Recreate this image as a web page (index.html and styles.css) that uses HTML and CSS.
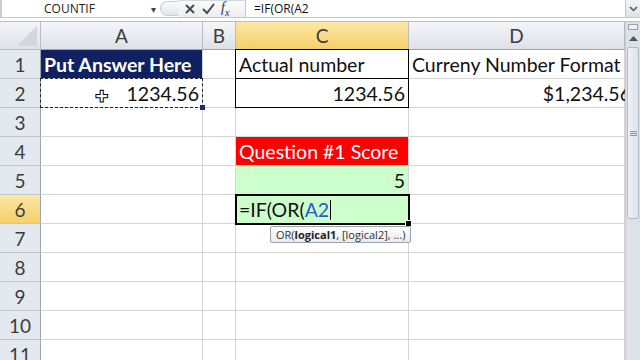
FILE: index.html
```html
<!DOCTYPE html>
<html>
<head>
<meta charset="utf-8">
<link rel="stylesheet" href="styles.css">
</head>
<body>
<div class="app">
  <div class="fbar">
    <div class="namebox"><span class="name">COUNTIF</span><span class="dd">&#9662;</span></div>
    <div class="grip"></div>
    <div class="btns">
      <svg class="ico" width="12" height="12" viewBox="0 0 12 12"><path d="M2 2 L10 10 M10 2 L2 10" stroke="#4a4a4a" stroke-width="2"/></svg>
      <svg class="ico" width="13" height="12" viewBox="0 0 13 12"><path d="M1 6 L5 10 L12 1" stroke="#4a4a4a" stroke-width="2" fill="none"/></svg>
      <span class="fx">f<sub>x</sub></span>
    </div>
    <div class="formula">=IF(OR(A2</div>
    <div class="expand"><svg width="9" height="6" viewBox="0 0 9 6"><path d="M1 1 L4.5 4.5 L8 1" stroke="#555" stroke-width="1.5" fill="none"/></svg></div>
  </div>
  <div class="gap"></div>
  <div class="sheet">
    <div class="grid">
      <div class="corner"><svg width="24" height="20" viewBox="0 0 24 20"><path d="M24 0 L24 20 L4 20 Z" fill="#d3d7dd"/></svg></div>
      <div class="ch">A</div>
      <div class="ch">B</div>
      <div class="ch sel">C</div>
      <div class="ch">D</div>

      <div class="rh">1</div>
      <div class="c navy">Put Answer Here</div>
      <div class="c"></div>
      <div class="c bx">Actual number</div>
      <div class="c">Curreny Number Format</div>

      <div class="rh">2</div>
      <div class="c r ants">1234.56<span class="cross">&#10010;</span></div>
      <div class="c"></div>
      <div class="c r bx">1234.56</div>
      <div class="c r clip"><span class="over">$1,234.56</span></div>

      <div class="rh">3</div>
      <div class="c"></div><div class="c"></div><div class="c"></div><div class="c"></div>

      <div class="rh">4</div>
      <div class="c"></div><div class="c"></div>
      <div class="c red">Question #1 Score</div>
      <div class="c"></div>

      <div class="rh">5</div>
      <div class="c"></div><div class="c"></div>
      <div class="c r green">5</div>
      <div class="c"></div>

      <div class="rh hl">6</div>
      <div class="c"></div><div class="c"></div>
      <div class="c green active">=IF(OR(<span class="ref">A2</span><span class="caret"></span>
        <div class="tip">OR(<b>logical1</b>, [logical2], ...)</div>
      </div>
      <div class="c"></div>

      <div class="rh">7</div>
      <div class="c"></div><div class="c"></div><div class="c"></div><div class="c"></div>
      <div class="rh">8</div>
      <div class="c"></div><div class="c"></div><div class="c"></div><div class="c"></div>
      <div class="rh">9</div>
      <div class="c"></div><div class="c"></div><div class="c"></div><div class="c"></div>
      <div class="rh">10</div>
      <div class="c"></div><div class="c"></div><div class="c"></div><div class="c"></div>
      <div class="rh">11</div>
      <div class="c"></div><div class="c"></div><div class="c"></div><div class="c"></div>
    </div>
    <div class="vscroll">
      <div class="split"></div>
      <div class="up"><svg width="9" height="5" viewBox="0 0 9 5"><path d="M0 5 L4.5 0 L9 5 Z" fill="#555"/></svg></div>
      <div class="thumb"><span class="grips"></span></div>
    </div>
  </div>
</div>
</body>
</html>
```
FILE: styles.css
```css
* { box-sizing: border-box; }
html, body { margin: 0; padding: 0; }
body { width: 640px; height: 360px; overflow: hidden; background: #fff; font-family: Lato, "Open Sans", sans-serif; }
.app { width: 640px; height: 360px; overflow: hidden; display: flex; flex-direction: column; }
.app > * { flex-shrink: 0; }

.fbar { height: 18px; display: flex; align-items: stretch; border-bottom: 1px solid #c5c9cf; border-left: 2px solid #c9ccd1; background: #fff; }
.namebox { width: 158px; display: flex; align-items: center; justify-content: space-between; padding-left: 42px; padding-right: 4px; font-family: "Open Sans", sans-serif; font-size: 12px; color: #222; }
.dd { font-size: 10px; color: #444; }
.grip { width: 18px; margin: 1px 0; border: 1px solid #c9cdd3; border-right: none; border-radius: 9px 0 0 9px; background: linear-gradient(#fafafa, #e2e5ea); }
.btns { width: 67px; display: flex; align-items: center; gap: 6px; padding-left: 6px; background: linear-gradient(#fafafa, #eceef1); border-top: 1px solid #d5d8dc; }
.fx { font-family: "Liberation Serif", serif; font-style: italic; font-size: 14px; color: #333; line-height: 1; }
.fx sub { font-size: 10px; }
.formula { flex: 1; border-left: 1px solid #c5c9cf; padding-left: 8px; font-family: "Open Sans", sans-serif; font-size: 12px; line-height: 17px; color: #111; }
.expand { width: 15px; border-left: 1px solid #c5c9cf; background: linear-gradient(#f4f5f7, #dde1e7); display: flex; align-items: center; justify-content: center; }

.gap { height: 4px; background: #fff; border-bottom: 1px solid #b8bdc4; }

.sheet { height: 338px; display: flex; overflow: hidden; }
.grid { width: 625px; display: grid; grid-template-columns: 41px 162px 33px 173px 216px; grid-template-rows: 28px repeat(11, 29px); }

.corner { background: linear-gradient(#f2f4f7, #dfe3e9); border-right: 1px solid #b7bcc4; border-bottom: 1px solid #b7bcc4; display: flex; align-items: flex-end; justify-content: flex-end; padding: 0 3px 3px 0; }
.ch { background: linear-gradient(#f4f6f9, #dde1e7); border-right: 1px solid #b7bcc4; border-bottom: 1px solid #9ea4ad; display: flex; align-items: center; justify-content: center; font-size: 19px; color: #3c3c3c; }
.ch.sel { background: linear-gradient(#fbe7a6, #f6d069); border-bottom-color: #c2a14a; }
.rh { background: #e4e9f0; border-right: 1px solid #9ea4ad; border-bottom: 1px solid #c0c5cc; display: flex; align-items: center; justify-content: center; font-size: 19px; color: #3c3c3c; }
.rh.hl { background: linear-gradient(#fbe7a6, #f6d069); }

.c { position: relative; border-right: 1px solid #d4d4d4; border-bottom: 1px solid #d4d4d4; font-size: 19.5px; line-height: 29px; padding: 0 3px; white-space: nowrap; color: #111; }
.r { text-align: right; }
.navy { background: #0f2161; color: #fff; font-weight: bold; }
.red { background: #ff0000; color: #fff; }
.green { background: #ccffcc; }
.bx { border: 1px solid #000; margin: -1px 0 0 -1px; }
.clip { overflow: visible; }
.over { position: absolute; right: -7px; top: 0; }

.ants::after { content: ""; position: absolute; left: -1px; top: -1px; right: -1px; bottom: -1px; border: 1px dashed #222; }
.ants::before { content: ""; position: absolute; right: -3px; bottom: -3px; width: 5px; height: 5px; background: #1d2a77; z-index: 2; }
.cross { position: absolute; left: 54px; top: 2px; font-size: 16px; color: #fff; -webkit-text-stroke: 1px #000; }

.active { outline: 2px solid #000; outline-offset: -1px; z-index: 3; }
.active::after { content: ""; position: absolute; right: -4px; bottom: -4px; width: 5px; height: 5px; background: #000; border: 1px solid #fff; }
.ref { color: #1f5dbf; }
.caret { display: inline-block; width: 1px; height: 20px; background: #000; vertical-align: -3px; margin-left: 1px; }
.tip { position: absolute; left: 34px; top: 31px; height: 17px; padding: 0 5px; background: linear-gradient(#ffffff, #e8ebef); border: 1px solid #9da3ab; border-radius: 2px; font-family: "Open Sans", sans-serif; font-size: 11px; line-height: 15px; color: #333; z-index: 5; }
.tip b { color: #222; }

.vscroll { position: relative; z-index: 10; width: 15px; background: #dde2ea; border-left: 1px solid #c9ced6; display: flex; flex-direction: column; }
.split { height: 6px; margin: 2px 2px 0; border: 1px solid #9aa0a8; background: #f0f2f5; }
.up { height: 16px; display: flex; align-items: center; justify-content: center; }
.thumb { height: 172px; margin: 1px 1px 0; background: linear-gradient(90deg, #eef1f5, #dfe4eb); border: 1px solid #b3bac4; border-radius: 2px; display: flex; align-items: center; justify-content: center; }
.grips { width: 7px; height: 5px; border-top: 1px solid #8a919b; border-bottom: 1px solid #8a919b; position: relative; }
.grips::after { content: ""; position: absolute; left: 0; right: 0; top: 1px; border-top: 1px solid #8a919b; }
```
